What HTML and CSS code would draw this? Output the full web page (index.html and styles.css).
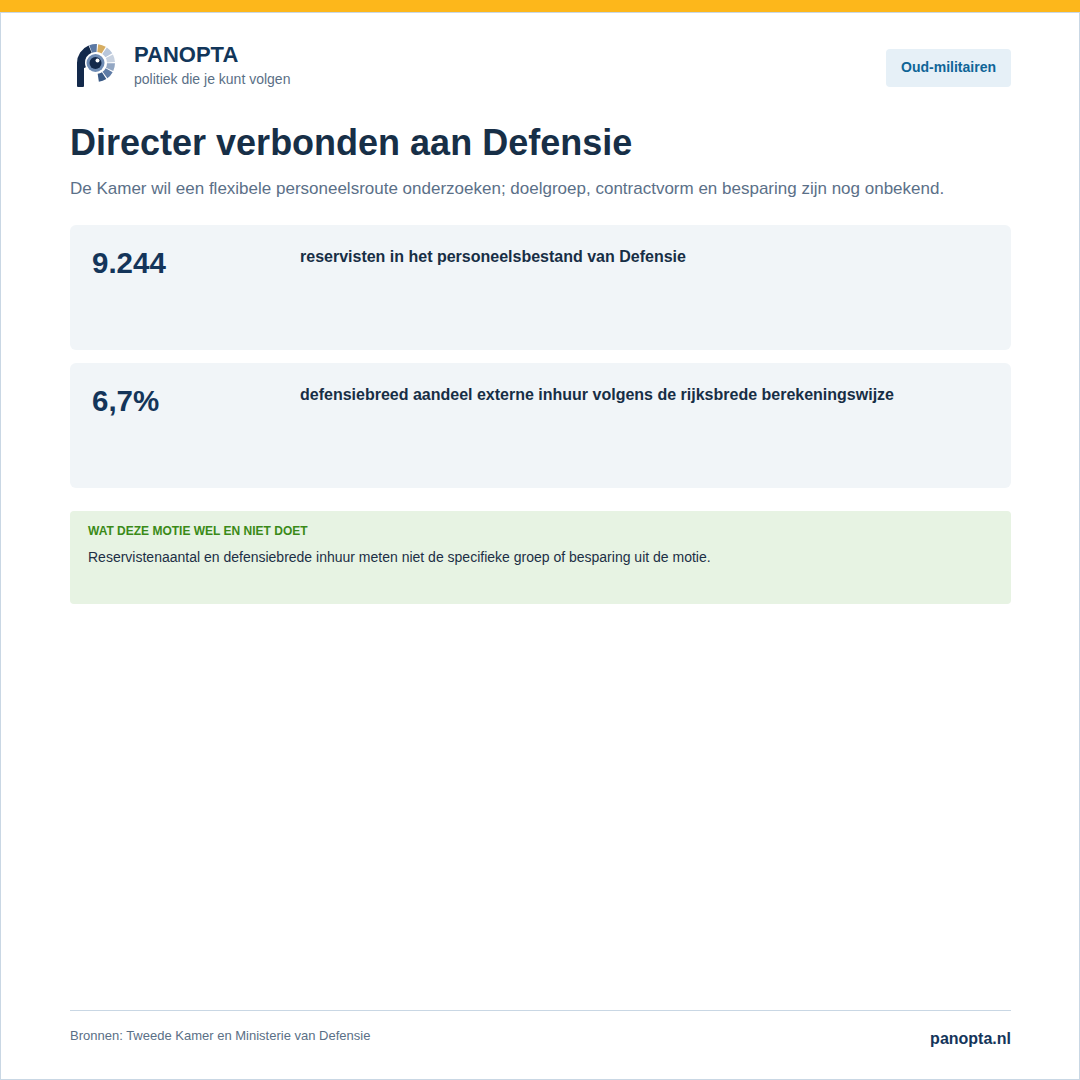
FILE: index.html
```html
<!DOCTYPE html>
<html lang="nl">
<head>
<meta charset="utf-8">
<title>Panopta</title>
<link rel="stylesheet" href="styles.css">
</head>
<body>
<div class="topbar"></div>
<div class="page">
  <header class="header">
    <div class="brand">
      <svg class="logo" viewBox="0 0 48 50" width="48" height="50" aria-hidden="true">
        <rect x="5" y="22" width="7" height="25" rx="1" fill="#13294b"/>
        <circle cx="24" cy="23" r="15" fill="none" stroke="#13294b" stroke-width="8" pathLength="360" stroke-dasharray="90 360" stroke-dashoffset="-157"/>
        <circle cx="24" cy="23" r="15" fill="none" stroke="#5b78a3" stroke-width="8" pathLength="360" stroke-dasharray="24 360" stroke-dashoffset="-249"/>
        <circle cx="24" cy="23" r="15" fill="none" stroke="#d6ad62" stroke-width="8" pathLength="360" stroke-dasharray="24 360" stroke-dashoffset="-277"/>
        <circle cx="24" cy="23" r="15" fill="none" stroke="#b8c6da" stroke-width="8" pathLength="360" stroke-dasharray="24 360" stroke-dashoffset="-305"/>
        <circle cx="24" cy="23" r="15" fill="none" stroke="#c8d2e0" stroke-width="8" pathLength="360" stroke-dasharray="24 360" stroke-dashoffset="-333"/>
        <circle cx="24" cy="23" r="15" fill="none" stroke="#93a7c3" stroke-width="8" pathLength="360" stroke-dasharray="24 360" stroke-dashoffset="-1"/>
        <circle cx="24" cy="23" r="15" fill="none" stroke="#5f7ca6" stroke-width="8" pathLength="360" stroke-dasharray="24 360" stroke-dashoffset="-29"/>
        <circle cx="24" cy="23" r="15" fill="none" stroke="#3a5a86" stroke-width="8" pathLength="360" stroke-dasharray="24 360" stroke-dashoffset="-57"/>
        <circle cx="23.5" cy="23" r="9" fill="#6f8cb4"/>
        <circle cx="23.5" cy="23" r="6" fill="#13294b"/>
        <circle cx="25.5" cy="20.5" r="2" fill="#ffffff"/>
      </svg>
      <div class="brand-text">
        <div class="brand-name">PANOPTA</div>
        <div class="brand-tag">politiek die je kunt volgen</div>
      </div>
    </div>
    <div class="tag">Oud-militairen</div>
  </header>

  <h1 class="title">Directer verbonden aan Defensie</h1>
  <p class="subtitle">De Kamer wil een flexibele personeelsroute onderzoeken; doelgroep, contractvorm en besparing zijn nog onbekend.</p>

  <div class="stats">
    <div class="stat">
      <div class="stat-num">9.244</div>
      <div class="stat-label">reservisten in het personeelsbestand van Defensie</div>
    </div>
    <div class="stat">
      <div class="stat-num">6,7%</div>
      <div class="stat-label">defensiebreed aandeel externe inhuur volgens de rijksbrede berekeningswijze</div>
    </div>
  </div>

  <div class="note">
    <div class="note-head">WAT DEZE MOTIE WEL EN NIET DOET</div>
    <div class="note-text">Reservistenaantal en defensiebrede inhuur meten niet de specifieke groep of besparing uit de motie.</div>
  </div>

  <footer class="footer">
    <div class="sources">Bronnen: Tweede Kamer en Ministerie van Defensie</div>
    <div class="site">panopta.nl</div>
  </footer>
</div>
</body>
</html>
```

FILE: styles.css
```css
* { box-sizing: border-box; }
html, body {
  margin: 0;
  padding: 0;
  width: 1080px;
  height: 1080px;
  background: #ffffff;
  font-family: "Liberation Sans", Arial, sans-serif;
  color: #172e45;
}
.topbar {
  height: 12px;
  background: #fdb71b;
}
.page {
  height: 1068px;
  border: 1px solid #c9d7e4;
  padding: 27px 68px 0 69px;
  display: flex;
  flex-direction: column;
}
.header {
  display: flex;
  justify-content: space-between;
  align-items: flex-start;
}
.brand {
  display: flex;
  align-items: flex-start;
  gap: 14px;
}
.logo {
  display: block;
  margin-left: 2px;
  width: 48px;
  height: 50px;
}
.brand-text {
  padding-top: 2px;
}
.brand-name {
  font-size: 22px;
  font-weight: 700;
  color: #12365a;
  line-height: 26px;
}
.brand-tag {
  font-size: 14px;
  color: #5a6f86;
  line-height: 18px;
  margin-top: 2px;
}
.tag {
  margin-top: 9px;
  background: #e6f0f7;
  color: #0f6597;
  font-weight: 700;
  font-size: 14px;
  border-radius: 4px;
  padding: 10px 15px 11px;
  line-height: 17px;
}
.title {
  margin: 31px 0 0;
  font-size: 36px;
  line-height: 44px;
  font-weight: 700;
  color: #172f47;
}
.subtitle {
  margin: 12px 0 0;
  font-size: 17px;
  line-height: 24px;
  color: #5b7088;
}
.stats {
  margin-top: 24px;
  display: flex;
  flex-direction: column;
  gap: 13px;
}
.stat {
  height: 125px;
  background: #f1f5f8;
  border-radius: 6px;
  padding: 20px 22px;
  display: grid;
  grid-template-columns: 208px 1fr;
}
.stat-num {
  font-size: 29.5px;
  line-height: 36px;
  font-weight: 700;
  color: #14355a;
}
.stat-label {
  font-size: 16px;
  font-weight: 700;
  line-height: 22px;
  padding-top: 1px;
  color: #172e45;
}
.note {
  margin-top: 23px;
  height: 93px;
  background: #e7f3e3;
  border-radius: 4px;
  padding: 12px 18px;
}
.note-head {
  font-size: 12px;
  font-weight: 700;
  color: #3a8a17;
  line-height: 16px;
}
.note-text {
  margin-top: 8px;
  font-size: 14px;
  line-height: 20px;
  color: #1c2f45;
}
.footer {
  margin-top: auto;
  margin-bottom: 29px;
  border-top: 1px solid #c9d7e4;
  padding-top: 16px;
  display: flex;
  justify-content: space-between;
  align-items: flex-start;
}
.sources {
  font-size: 13px;
  color: #5a6f86;
  line-height: 18px;
}
.site {
  font-size: 16px;
  font-weight: 700;
  color: #14355a;
  line-height: 22px;
  margin-top: 1px;
}
```
